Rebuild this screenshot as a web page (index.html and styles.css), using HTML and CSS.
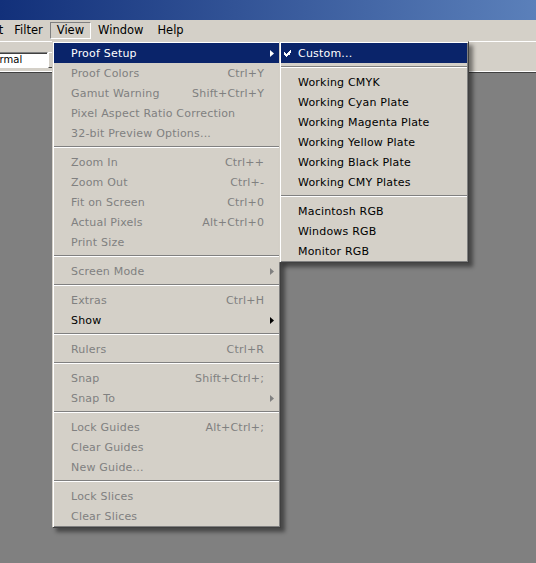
FILE: index.html
```html
<!DOCTYPE html>
<html>
<head>
<meta charset="utf-8">
<link rel="stylesheet" href="styles.css">
</head>
<body>
<div class="window">
  <div class="titlebar"></div>
  <div class="menubar">
    <div class="mb-item mb-edit">Edit</div>
    <div class="mb-item">Filter</div>
    <div class="mb-item mb-open">View</div>
    <div class="mb-item">Window</div>
    <div class="mb-item">Help</div>
  </div>
  <div class="toolbar">
    <div class="field">Normal</div>
    <div class="dropbtn"></div>
  </div>
  <div class="workspace"></div>

  <div class="menu menu-main">
    <div class="item active"><span class="label">Proof Setup</span><span class="arrow-slot"><svg class="arrow" width="4" height="7" viewBox="0 0 4 7"><polygon points="0,0 4,3.5 0,7" fill="#fff"/></svg></span></div>
    <div class="item"><span class="label">Proof Colors</span><span class="shortcut">Ctrl+Y</span><span class="arrow-slot"></span></div>
    <div class="item"><span class="label">Gamut Warning</span><span class="shortcut">Shift+Ctrl+Y</span><span class="arrow-slot"></span></div>
    <div class="item"><span class="label">Pixel Aspect Ratio Correction</span><span class="arrow-slot"></span></div>
    <div class="item"><span class="label">32-bit Preview Options...</span><span class="arrow-slot"></span></div>
    <div class="sep"></div>
    <div class="item"><span class="label">Zoom In</span><span class="shortcut">Ctrl++</span><span class="arrow-slot"></span></div>
    <div class="item"><span class="label">Zoom Out</span><span class="shortcut">Ctrl+-</span><span class="arrow-slot"></span></div>
    <div class="item"><span class="label">Fit on Screen</span><span class="shortcut">Ctrl+0</span><span class="arrow-slot"></span></div>
    <div class="item"><span class="label">Actual Pixels</span><span class="shortcut">Alt+Ctrl+0</span><span class="arrow-slot"></span></div>
    <div class="item"><span class="label">Print Size</span><span class="arrow-slot"></span></div>
    <div class="sep"></div>
    <div class="item"><span class="label">Screen Mode</span><span class="arrow-slot"><svg class="arrow" width="4" height="7" viewBox="0 0 4 7"><polygon points="0,0 4,3.5 0,7" fill="#808080"/></svg></span></div>
    <div class="sep"></div>
    <div class="item"><span class="label">Extras</span><span class="shortcut">Ctrl+H</span><span class="arrow-slot"></span></div>
    <div class="item enabled"><span class="label">Show</span><span class="arrow-slot"><svg class="arrow" width="4" height="7" viewBox="0 0 4 7"><polygon points="0,0 4,3.5 0,7" fill="#000"/></svg></span></div>
    <div class="sep"></div>
    <div class="item"><span class="label">Rulers</span><span class="shortcut">Ctrl+R</span><span class="arrow-slot"></span></div>
    <div class="sep"></div>
    <div class="item"><span class="label">Snap</span><span class="shortcut">Shift+Ctrl+;</span><span class="arrow-slot"></span></div>
    <div class="item"><span class="label">Snap To</span><span class="arrow-slot"><svg class="arrow" width="4" height="7" viewBox="0 0 4 7"><polygon points="0,0 4,3.5 0,7" fill="#808080"/></svg></span></div>
    <div class="sep"></div>
    <div class="item"><span class="label">Lock Guides</span><span class="shortcut">Alt+Ctrl+;</span><span class="arrow-slot"></span></div>
    <div class="item"><span class="label">Clear Guides</span><span class="arrow-slot"></span></div>
    <div class="item"><span class="label">New Guide...</span><span class="arrow-slot"></span></div>
    <div class="sep"></div>
    <div class="item"><span class="label">Lock Slices</span><span class="arrow-slot"></span></div>
    <div class="item"><span class="label">Clear Slices</span><span class="arrow-slot"></span></div>
  </div>

  <div class="menu menu-sub">
    <div class="item sub-item active"><span class="check-slot"><svg class="check" width="7" height="7" viewBox="0 0 7 7" shape-rendering="crispEdges"><path fill="#fff" d="M6 0h1v3h-1zM5 1h1v4h-1zM4 2h1v3h-1zM3 3h1v3h-1zM0 2h1v3h-1zM1 3h1v3h-1zM2 4h1v3h-1z"/></svg></span><span class="label">Custom...</span></div>
    <div class="sep"></div>
    <div class="item sub-item"><span class="check-slot"></span><span class="label">Working CMYK</span></div>
    <div class="item sub-item"><span class="check-slot"></span><span class="label">Working Cyan Plate</span></div>
    <div class="item sub-item"><span class="check-slot"></span><span class="label">Working Magenta Plate</span></div>
    <div class="item sub-item"><span class="check-slot"></span><span class="label">Working Yellow Plate</span></div>
    <div class="item sub-item"><span class="check-slot"></span><span class="label">Working Black Plate</span></div>
    <div class="item sub-item"><span class="check-slot"></span><span class="label">Working CMY Plates</span></div>
    <div class="sep"></div>
    <div class="item sub-item"><span class="check-slot"></span><span class="label">Macintosh RGB</span></div>
    <div class="item sub-item"><span class="check-slot"></span><span class="label">Windows RGB</span></div>
    <div class="item sub-item"><span class="check-slot"></span><span class="label">Monitor RGB</span></div>
  </div>
</div>
</body>
</html>
```
FILE: styles.css
```css
* { box-sizing: border-box; }
html, body { margin: 0; padding: 0; }
body {
  width: 536px;
  height: 563px;
  overflow: hidden;
  background: #808080;
  font-family: "DejaVu Sans", "Liberation Sans", sans-serif;
  font-size: 11px;
  color: #000;
}
.window {
  position: relative;
  display: flex;
  flex-direction: column;
  height: 563px;
  overflow: hidden;
}
.titlebar {
  height: 20px;
  flex: none;
  background: linear-gradient(to right, #12307a, #5b80ba);
}
.menubar {
  height: 21px;
  flex: none;
  display: flex;
  align-items: flex-start;
  padding-top: 2px;
  margin-left: -26px;
  background: #d4d0c8;
  font-size: 11.5px;
}
.mb-item {
  height: 17px;
  line-height: 15px;
  padding: 0 6px;
  border: 1px solid transparent;
  white-space: nowrap;
}
.mb-edit { padding-right: 3px; }
.mb-open { border-color: #808080 #fff #fff #808080; }
.toolbar {
  height: 32px;
  flex: none;
  display: flex;
  align-items: flex-start;
  padding-top: 10px;
  background: #d4d0c8;
  border-top: 1px solid #fff;
  border-bottom: 1px solid #404040;
  box-shadow: inset 0 -3px 0 -2px #fff;
}
.field {
  width: 66px;
  height: 16px;
  margin-left: -18px;
  padding-left: 3px;
  background: #fff;
  border: 1px solid;
  border-color: #808080 #fff #fff #808080;
  box-shadow: inset 1px 1px #404040;
  font-size: 10px;
  line-height: 14px;
}
.dropbtn {
  width: 16px;
  height: 16px;
  background: #d4d0c8;
  border: 1px solid;
  border-color: #fff #404040 #404040 #fff;
}
.workspace {
  flex: 1;
  background: #808080;
}
.menu {
  position: absolute;
  top: 41px;
  padding: 1px;
  background: #d4d0c8;
  border: 1px solid;
  border-color: #d4d0c8 #404040 #404040 #d4d0c8;
  box-shadow: inset 1px 1px #fff, inset -1px -1px #808080, 4px 4px 4px rgba(0, 0, 0, 0.45);
  letter-spacing: 0.2px;
}
.menu-main { left: 52px; width: 229px; }
.menu-sub { left: 279px; width: 190px; }
.item {
  display: flex;
  align-items: center;
  height: 20px;
  padding-left: 17px;
  color: #808080;
  white-space: nowrap;
}
.item.enabled, .sub-item { color: #000; }
.item.active { background: #0a246a; color: #fff; }
.sub-item { padding-left: 0; }
.label { flex: 1; }
.shortcut { margin-right: -0.2px; }
.arrow-slot {
  width: 15px;
  flex: none;
  display: flex;
  align-items: center;
}
.arrow { display: block; margin-left: 6px; }
.check-slot {
  width: 17px;
  flex: none;
  display: flex;
  align-items: center;
}
.check { display: block; margin-left: 3px; }
.sep { height: 9px; padding-top: 3px; }
.sep::before {
  content: "";
  display: block;
  border-top: 1px solid #808080;
  border-bottom: 1px solid #fff;
}
```
